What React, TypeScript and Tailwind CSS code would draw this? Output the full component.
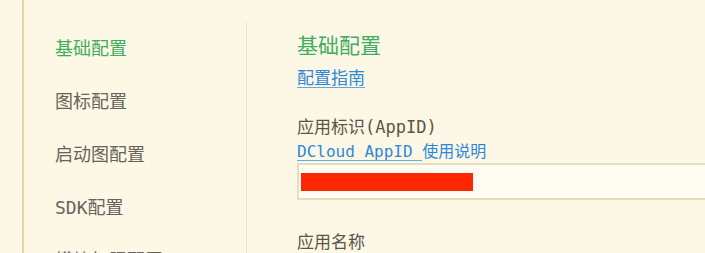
import React from "react";

const menu = ["基础配置", "图标配置", "启动图配置", "SDK配置", "模块权限配置"];

export default function App() {
  return (
    <div className="flex h-[253px] w-full overflow-hidden bg-[#fdf7e6] font-['DejaVu_Sans_Mono','Noto_Sans_CJK_SC',monospace]">
      <div className="w-[24px] shrink-0 border-r-2 border-[#e2d5ab]" />
      <div className="mt-[22px] w-[223px] shrink-0 border-r border-[#efe5c6] pl-[31px]">
        {menu.map((item, i) => (
          <div
            key={item}
            className={
              "flex h-[53px] items-center text-[18px] " +
              (i === 0 ? "text-[#3fad60]" : "text-[#67645b]")
            }
          >
            {item}
          </div>
        ))}
      </div>
      <div className="shrink-0 pl-[50px] pt-[31px]">
        <h2 className="text-[21px] leading-[30px] text-[#3fad60]">基础配置</h2>
        <a className="mt-[5px] block w-fit text-[17px] leading-[24px] text-[#2c88da] underline decoration-[#66a8e4] underline-offset-[3px]">
          配置指南
        </a>
        <div className="mt-[25px] text-[17px] leading-[24px] text-[#5a5547]">应用标识(AppID)</div>
        <div className="mt-[2px] text-[16px] leading-[22px] text-[#2c88da]">
          <a className="underline decoration-[#66a8e4] underline-offset-[3px]">DCloud AppID </a>
          <span>使用说明</span>
        </div>
        <div className="h-[37px] w-[440px] border-2 border-[#e6ddbd] bg-[#fffcf4] pl-[2px] pt-[8px]">
          <div className="h-[18px] w-[172px] bg-[#ff2600]" />
        </div>
        <div className="mt-[30px] text-[17px] leading-[24px] text-[#5a5547]">应用名称</div>
      </div>
    </div>
  );
}
